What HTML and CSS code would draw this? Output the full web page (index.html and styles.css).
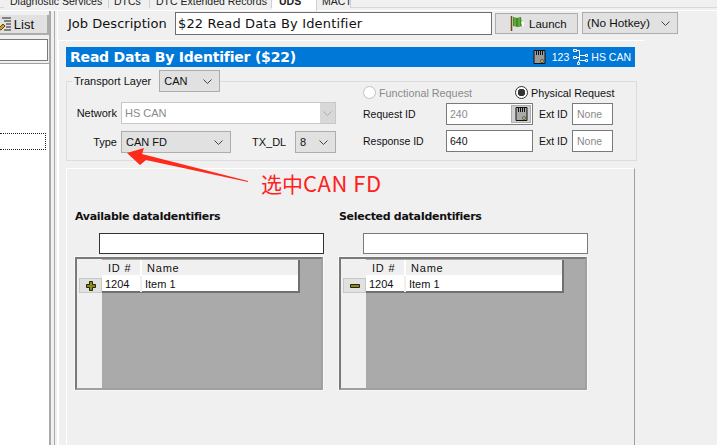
FILE: index.html
```html
<!DOCTYPE html>
<html lang="en">
<head>
<meta charset="utf-8">
<title>Read Data By Identifier</title>
<link rel="stylesheet" href="styles.css">
</head>
<body>
<div class="app">
  <nav class="tabs">
    <span class="tab t1">Diagnostic Services</span>
    <span class="tab t2">DTCs</span>
    <span class="tab t3">DTC Extended Records</span>
    <span class="tab t4 active">UDS</span>
    <span class="tab t5">MACT</span>
  </nav>
  <div class="body">
    <aside class="side">
      <div class="list-btn">
        <svg class="list-icon" width="14" height="14" viewBox="0 0 14 14"><path d="M0 12l5-5 2 2-4 4z" fill="#c9a227" stroke="#5a4510"/><path d="M4 1h9M6 4h7M8 7h5M8 10h5M6 13h7" stroke="#222" stroke-width="1.2"/></svg>
        <span>List</span>
      </div>
      <div class="side-input"></div>
      <div class="side-list"><div class="side-focus"></div></div>
    </aside>
    <div class="splitter"></div>
    <main class="main">
      <div class="job-row">
        <label class="job-label">Job Description</label>
        <div class="job-input">$22 Read Data By Identifier</div>
        <button class="launch">
          <svg width="15" height="17" viewBox="0 0 15 17"><path d="M1.500 1v15" stroke="#6b4a1e" stroke-width="1.500"/><path d="M3 2l4 1 4-1 1 9-4 1-5-1z" fill="#3f8f1f"/><path d="M5 3v8M9 3v8" stroke="#7fc25a"/><path d="M11 7h3v4h-2z" fill="#fff"/></svg>
          <span>Launch</span>
        </button>
        <div class="combo hotkey"><span>(No Hotkey)</span><svg class="chev" width="9" height="5" viewBox="0 0 9 5"><path d="M.5.5l4 4 4-4" fill="none" stroke="#444"/></svg></div>
      </div>
      <section class="panel">
        <header class="bar">
          <h1>Read Data By Identifier ($22)</h1>
          <div class="bar-info">
            <svg width="13" height="14" viewBox="0 0 13 14"><path d="M1 .5h11v13H1z" fill="#999" stroke="#111"/><path d="M3 1v4h1V1zM5 1v4h1V1zM7 1v4h1V1zM9 1v4h1V1z" fill="#111"/><circle cx="9" cy="11" r="1.500" fill="#cfd24a" stroke="#222" stroke-width=".6"/></svg>
            <span class="num">123</span>
            <svg width="17" height="18" viewBox="0 0 17 18"><g fill="none" stroke="#fff"><path d="M1.500 1.500h3v2h-3zM1.500 8.500h3v2h-3zM13.500 6.500h2v2h-2zM13.500 11.500h2v2h-2zM5.500 14.500h2v2h-2z"/><path d="M4.500 2.500h3v10M4.500 9.500h3M7.500 7.500h6M7.500 12.500h6M6.500 12.500v2"/></g></svg>
            <span class="bar-net">HS CAN</span>
          </div>
        </header>
        <fieldset class="transport">
          <legend class="legend"><span>Transport Layer</span>
            <div class="combo tl"><span>CAN</span><svg class="chev" width="9" height="5" viewBox="0 0 9 5"><path d="M.5.5l4 4 4-4" fill="none" stroke="#444"/></svg></div>
          </legend>
          <div class="transport-body">
            <div class="net-grid">
              <span class="lbl">Network</span>
              <div class="network"><span>HS CAN</span><i class="net-arrow"><svg width="9" height="5" viewBox="0 0 9 5"><path d="M.5.5l4 4 4-4" fill="none" stroke="#aaa"/></svg></i></div>
              <span class="lbl">Type</span>
              <div class="type-row">
                <div class="combo type"><span>CAN FD</span><svg class="chev" width="9" height="5" viewBox="0 0 9 5"><path d="M.5.5l4 4 4-4" fill="none" stroke="#444"/></svg></div>
                <span class="txdl">TX_DL</span>
                <div class="combo dl"><span>8</span><svg class="chev" width="9" height="5" viewBox="0 0 9 5"><path d="M.5.5l4 4 4-4" fill="none" stroke="#444"/></svg></div>
              </div>
            </div>
            <div class="req">
              <div class="radios">
                <span class="radio off"><i></i>Functional Request</span>
                <span class="radio on"><i></i>Physical Request</span>
              </div>
              <div class="req-grid">
                <span>Request ID</span>
                <div class="field dis"><span>240</span><i class="mem"><svg width="13" height="14" viewBox="0 0 13 14"><path d="M1 .5h11v13H1z" fill="#aaa" stroke="#111"/><path d="M3 1v4h1V1zM5 1v4h1V1zM7 1v4h1V1zM9 1v4h1V1z" fill="#111"/><circle cx="9" cy="11" r="1.500" fill="#cfd24a" stroke="#222" stroke-width=".6"/></svg></i></div>
                <span class="ext">Ext ID</span>
                <div class="field none">None</div>
                <span>Response ID</span>
                <div class="field">640</div>
                <span class="ext">Ext ID</span>
                <div class="field none">None</div>
              </div>
            </div>
          </div>
        </fieldset>
        <section class="lower">
          <div class="col">
            <h2>Available dataIdentifiers</h2>
            <div class="filter dark"></div>
            <div class="grid">
              <div class="selectors"><button class="sel"><svg width="10" height="10" viewBox="0 0 10 10"><path d="M3.500 .5h3v3h3v3h-3v3h-3v-3h-3v-3h3z" fill="#8f8a00" stroke="#222"/></svg></button></div>
              <div class="table">
                <div class="thead"><span class="c1">ID #</span><span class="c2">Name</span></div>
                <div class="trow"><span class="c1">1204</span><span class="c2">Item 1</span></div>
              </div>
            </div>
          </div>
          <div class="col">
            <h2>Selected dataIdentifiers</h2>
            <div class="filter"></div>
            <div class="grid">
              <div class="selectors"><button class="sel"><svg width="10" height="4" viewBox="0 0 10 4"><path d="M.5.500h9v3h-9z" fill="#8f8a00" stroke="#222"/></svg></button></div>
              <div class="table">
                <div class="thead"><span class="c1">ID #</span><span class="c2">Name</span></div>
                <div class="trow"><span class="c1">1204</span><span class="c2">Item 1</span></div>
              </div>
            </div>
          </div>
        </section>
      </section>
    </main>
  </div>
  <svg class="arrow" width="140" height="50" viewBox="0 0 140 50"><path d="M2 8L19 3 17 9 123 36 123 37 21 15 15 20z" fill="#ff2a1a"/></svg>
  <div class="note">选中<span class="note-latin">CAN FD</span></div>
</div>
</body>
</html>
```
FILE: styles.css
```css
* { box-sizing: border-box; }
html, body { margin: 0; padding: 0; }
body { background: #f0f0f0; color: #111; font: 11px "Liberation Sans", Arial, sans-serif; }
.app { position: relative; width: 717px; height: 445px; overflow: hidden; display: flex; flex-direction: column; }

.tabs { height: 11px; flex: none; display: flex; padding-left: 4px; background: linear-gradient(#f0f0f0 7px, #d8d8d8 7px, #d8d8d8 8px, #f0f0f0 8px, #f0f0f0 10px, #fff 10px); overflow: hidden; }
.tab { height: 13px; margin-top: -5px; font: 10.500px/12px "Liberation Sans", sans-serif; white-space: nowrap; border-right: 1px solid #d0d0d0; background: #f0f0f0; color: #222; }
.t1 { width: 105px; padding-left: 6px; }
.t2 { width: 41px; padding-left: 5px; }
.t3 { width: 122px; padding-left: 6px; }
.t4 { width: 45px; padding-left: 7px; height: 16px; background: #fff; font-weight: 700; }
.t5 { width: 34px; padding-left: 5px; }

.body { flex: 1; display: flex; min-height: 0; }
.side { width: 49px; flex: none; display: flex; flex-direction: column; padding-top: 4px; }
.list-btn { height: 20px; margin-bottom: 4px; flex: none; display: flex; align-items: center; justify-content: flex-end; gap: 2px; padding-right: 13px; background: #e1e1e1; border-right: 2px solid #adadad; border-bottom: 2px solid #adadad; font: 13px "Liberation Sans", sans-serif; overflow: hidden; }
.list-icon { flex: none; }
.side-input { height: 22px; background: #fff; border: 1px solid #7a7a7a; border-left: 0; margin-right: 1px; flex: none; }
.side-list { flex: 1; margin-top: 2px; background: #fff; border-top: 1px solid #a0a0a0; padding-top: 69px; }
.side-focus { height: 17px; margin-right: 3px; border: 1px dotted #222; border-left: 0; }
.splitter { width: 8px; flex: none; border-left: 2px solid #a9a9a9; background: linear-gradient(to right, #f0f0f0 3px, #a9a9a9 3px, #a9a9a9 4px, #f0f0f0 4px); }

.main { flex: 1; min-width: 0; min-height: 0; display: flex; flex-direction: column; padding-top: 1px; background: #f0f0f0; border-left: 1px solid #fff; }
.job-row { flex: none; display: flex; align-items: flex-start; height: 28px; padding-left: 10px; }
.job-label { width: 107px; padding-top: 4px; font: 13px "DejaVu Sans", sans-serif; letter-spacing: .03px; }
.job-input { width: 317px; height: 23px; background: #fff; border: 1px solid #6e6e6e; padding: 3px 2px; font: 13px "DejaVu Sans", sans-serif; letter-spacing: .15px; }
.launch { width: 83px; height: 21px; margin: 1px 0 0 3px; padding: 0 0 0 14px; display: flex; align-items: center; gap: 4px; background: #e1e1e1; border: 1px solid #adadad; font: 11.500px "Liberation Sans", sans-serif; color: #111; }
.combo { height: 22px; display: flex; align-items: center; justify-content: space-between; padding: 0 7px 0 4px; background: #e1e1e1; border: 1px solid #adadad; }
.hotkey { width: 96px; margin-left: 4px; font-size: 11.800px; }

.panel { width: 586px; flex: 1; min-height: 0; border-top: 1px solid #fff; border-left: 1px solid #fff; padding: 6px 0 0 7px; }
.bar { width: 569px; height: 20px; background: #0078d7; color: #fff; display: flex; align-items: center; justify-content: space-between; padding: 0 4px; }
.bar h1 { margin: 0; font: 700 14px "DejaVu Sans", sans-serif; letter-spacing: -.2px; }
.bar-info { display: flex; align-items: center; gap: 3px; font-size: 10.500px; }
.bar-info .num { margin-left: 3px; }
.bar-net { margin-left: -1px; }

.transport { width: 571px; height: 91px; margin: 3px 0 0; padding: 0; border: 1px solid #dcdcdc; min-width: 0; }
.legend { display: flex; align-items: center; gap: 8px; height: 22px; margin-left: 5px; padding: 0 0 0 2px; background: #f0f0f0; }
.combo.tl { width: 61px; }
.transport-body { display: flex; gap: 27px; }
.net-grid { display: grid; grid-template-columns: 50px 215px; column-gap: 4px; row-gap: 7px; grid-auto-rows: 22px; margin-top: 10px; align-items: center; }
.lbl { text-align: right; }
.network { height: 22px; display: flex; align-items: center; justify-content: space-between; background: #fff; border: 1px solid #c8c8c8; padding-left: 3px; color: #8a8a8a; }
.net-arrow { width: 15px; height: 20px; background: #d8d8d8; display: flex; align-items: center; justify-content: center; }
.type-row { display: flex; align-items: center; }
.combo.type { width: 110px; }
.txdl { margin-left: 21px; width: 43px; }
.combo.dl { width: 41px; }

.req { margin-top: -7px; width: 260px; }
.radios { display: flex; height: 15px; align-items: center; font-size: 10.800px; }
.radio { display: flex; align-items: center; gap: 3px; white-space: nowrap; }
.radio i { width: 13px; height: 13px; border-radius: 50%; background: #fff; border: 1px solid #c0c0c0; flex: none; }
.radio.off { width: 152px; color: #8a8a8a; }
.radio.on i { border-color: #333; background: radial-gradient(circle, #333 0 3.500px, #fff 4px); }
.req-grid { display: grid; grid-template-columns: 83px 87px 39px 41px; grid-auto-rows: 22px; row-gap: 5px; margin-top: 3px; align-items: center; font-size: 10.500px; white-space: nowrap; }
.field { height: 22px; background: #fff; border: 1px solid #7a7a7a; padding: 0 3px; display: flex; align-items: center; justify-content: space-between; }
.field.dis { color: #8a8a8a; padding-right: 1px; }
.field.none { color: #8a8a8a; padding-left: 4px; }
.ext { margin-left: 6px; }
.mem { width: 20px; height: 18px; background: #d0d0d0; border: 1px solid #adadad; display: flex; align-items: center; justify-content: center; }

.lower { width: 569px; height: 290px; margin-top: 7px; border-top: 1px solid #fff; border-left: 1px solid #fff; border-right: 1px solid #a0a0a0; display: flex; gap: 16px; padding: 41px 0 0 8px; }
.col { width: 248px; }
.lower h2 { margin: 0; height: 17px; font: 700 11px "DejaVu Sans", sans-serif; letter-spacing: -.3px; color: #111; white-space: nowrap; }
.filter { width: 225px; height: 21px; margin: 6px 0 3px 24px; background: #fff; border: 1px solid #7a7a7a; }
.filter.dark { border-color: #333; }
.grid { height: 133px; display: flex; background: #aaa; border: 2px solid; border-color: #7a7a7a #a0a0a0 #a0a0a0 #7a7a7a; box-shadow: 0 0 0 1px #f8f8f8; }
.selectors { width: 25px; flex: none; background: #f0f0f0; padding: 19px 0 0 2px; }
.sel { display: flex; align-items: center; justify-content: center; width: 23px; height: 15px; padding: 0; background: #e1e1e1; border: 1px solid #c8c8c8; }
.table { width: 198px; height: 33px; margin-top: 1px; background: #fff; border-right: 2px solid #707070; border-bottom: 2px solid #707070; }
.thead, .trow { display: flex; height: 16px; align-items: center; font: 11px "Liberation Sans", sans-serif; }
.thead { background: #f0f0f0; border-bottom: 1px solid #fff; letter-spacing: .8px; }
.c1 { width: 40px; padding-left: 6px; border-right: 2px solid #fff; height: 100%; display: flex; align-items: center; }
.trow .c1 { padding-left: 3px; border-right-color: #f0f0f0; }
.c2 { padding-left: 5px; }
.trow .c2 { padding-left: 3px; }

.arrow { position: absolute; left: 125px; top: 145px; }
.note { position: absolute; left: 261px; top: 169px; color: #ff2020; font: 21px/27px "Noto Sans CJK SC", sans-serif; white-space: nowrap; }
.note-latin { font-size: 22px; letter-spacing: .5px; }
```
